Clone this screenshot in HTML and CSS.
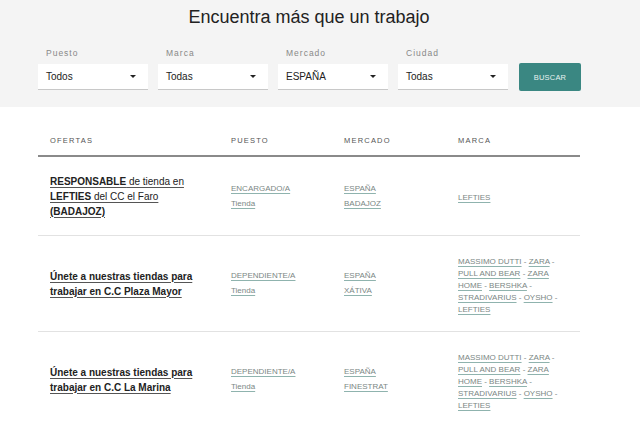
FILE: index.html
```html
<!DOCTYPE html>
<html lang="es">
<head>
<meta charset="utf-8">
<link rel="stylesheet" href="styles.css">
</head>
<body>
<section class="search">
  <h1 class="title">Encuentra más que un trabajo</h1>
  <form class="filters">
    <div class="field">
      <span class="label">Puesto</span>
      <div class="select"><span>Todos</span><span class="caret"></span></div>
    </div>
    <div class="field">
      <span class="label">Marca</span>
      <div class="select"><span>Todas</span><span class="caret"></span></div>
    </div>
    <div class="field">
      <span class="label">Mercado</span>
      <div class="select"><span>ESPAÑA</span><span class="caret"></span></div>
    </div>
    <div class="field">
      <span class="label">Ciudad</span>
      <div class="select"><span>Todas</span><span class="caret"></span></div>
    </div>
    <button type="button" class="btn">BUSCAR</button>
  </form>
</section>
<section class="results">
  <div class="table">
    <div class="row head">
      <div class="c c1">OFERTAS</div>
      <div class="c c2">PUESTO</div>
      <div class="c c3">MERCADO</div>
      <div class="c c4">MARCA</div>
    </div>
    <div class="row r1">
      <div class="c c1"><a class="offer"><b>RESPONSABLE</b> de tienda en <b>LEFTIES</b> del CC el Faro <b>(BADAJOZ)</b></a></div>
      <div class="c c2 stack"><a class="lk">ENCARGADO/A</a><a class="lk">Tienda</a></div>
      <div class="c c3 stack"><a class="lk">ESPAÑA</a><a class="lk">BADAJOZ</a></div>
      <div class="c c4 brands"><a class="lk">LEFTIES</a></div>
    </div>
    <div class="row">
      <div class="c c1"><a class="offer"><b>Únete a nuestras tiendas para trabajar en C.C Plaza Mayor</b></a></div>
      <div class="c c2 stack"><a class="lk">DEPENDIENTE/A</a><a class="lk">Tienda</a></div>
      <div class="c c3 stack"><a class="lk">ESPAÑA</a><a class="lk">XÁTIVA</a></div>
      <div class="c c4 brands"><a class="lk">MASSIMO DUTTI</a> - <a class="lk">ZARA</a> - <a class="lk">PULL AND BEAR</a> - <a class="lk">ZARA HOME</a> - <a class="lk">BERSHKA</a> - <a class="lk">STRADIVARIUS</a> - <a class="lk">OYSHO</a> - <a class="lk">LEFTIES</a></div>
    </div>
    <div class="row">
      <div class="c c1"><a class="offer"><b>Únete a nuestras tiendas para trabajar en C.C La Marina</b></a></div>
      <div class="c c2 stack"><a class="lk">DEPENDIENTE/A</a><a class="lk">Tienda</a></div>
      <div class="c c3 stack"><a class="lk">ESPAÑA</a><a class="lk">FINESTRAT</a></div>
      <div class="c c4 brands"><a class="lk">MASSIMO DUTTI</a> - <a class="lk">ZARA</a> - <a class="lk">PULL AND BEAR</a> - <a class="lk">ZARA HOME</a> - <a class="lk">BERSHKA</a> - <a class="lk">STRADIVARIUS</a> - <a class="lk">OYSHO</a> - <a class="lk">LEFTIES</a></div>
    </div>
  </div>
</section>
</body>
</html>
```
FILE: styles.css
```css
* { box-sizing: border-box; }
html, body { margin: 0; padding: 0; }
body {
  font-family: "Liberation Sans", Arial, sans-serif;
  color: #222;
  background: #fff;
  width: 640px;
  overflow: hidden;
}
.search {
  background: #f4f4f4;
  height: 107px;
  padding: 5px 0 0 38px;
}
.title {
  margin: 0;
  width: 542px;
  text-align: center;
  font-weight: 400;
  font-size: 18px;
  line-height: 24px;
  color: #222;
}
.filters {
  display: flex;
  align-items: flex-end;
  gap: 10px;
  margin: 19px 0 0 0;
}
.field {
  display: flex;
  flex-direction: column;
  width: 110px;
}
.label {
  font-size: 8.5px;
  letter-spacing: 1px;
  color: #888;
  padding-left: 8px;
  line-height: 10px;
  margin-bottom: 6px;
}
.select {
  background: #fff;
  height: 26px;
  border-bottom: 1px solid #c8c8c8;
  display: flex;
  align-items: center;
  justify-content: space-between;
  padding: 0 12px 0 8px;
  font-size: 10px;
  color: #222;
}
.caret {
  width: 0;
  height: 0;
  border-left: 3.5px solid transparent;
  border-right: 3.5px solid transparent;
  border-top: 3.5px solid #222;
}
.btn {
  margin-left: 1px;
  margin-bottom: -1px;
  width: 62px;
  height: 28px;
  background: #3a8782;
  border: 0;
  border-radius: 2px;
  color: #e8f2f1;
  font-family: inherit;
  font-size: 7.5px;
  letter-spacing: 0.2px;
  padding: 0;
}
.results { padding: 0 60px 0 38px; }
.table { width: 542px; }
.row {
  display: flex;
  align-items: center;
  border-bottom: 1px solid #e2e2e2;
  min-height: 96px;
}
.row.head {
  min-height: 0;
  height: 50px;
  padding-top: 18px;
  border-bottom: 2px solid #8a8a8a;
  font-size: 7.5px;
  letter-spacing: 1.2px;
  color: #555;
}
.c { padding-left: 12px; }
.c1 { width: 181px; }
.c2 { width: 113px; }
.c3 { width: 114px; }
.c4 { width: 134px; padding-right: 14px; }
.row.r1 { min-height: 0; height: 79px; }
.offer {
  font-size: 10px;
  line-height: 15px;
  color: #222;
  font-weight: 700;
  text-decoration: underline;
  text-decoration-color: #555;
  text-underline-offset: 2px;
  display: block;
  padding-right: 12px;
}
.offer b { font-weight: 700; }
.r1 .offer { font-weight: 400; }
.stack { display: flex; flex-direction: column; gap: 3px; }
.lk {
  font-size: 8px;
  line-height: 12px;
  color: #7b8785;
  text-decoration: underline;
  text-decoration-color: #8fb3ae;
  text-underline-offset: 2px;
}
.brands {
  font-size: 8px;
  line-height: 12px;
  color: #7b8785;
  padding-top: 4px;
}
```
